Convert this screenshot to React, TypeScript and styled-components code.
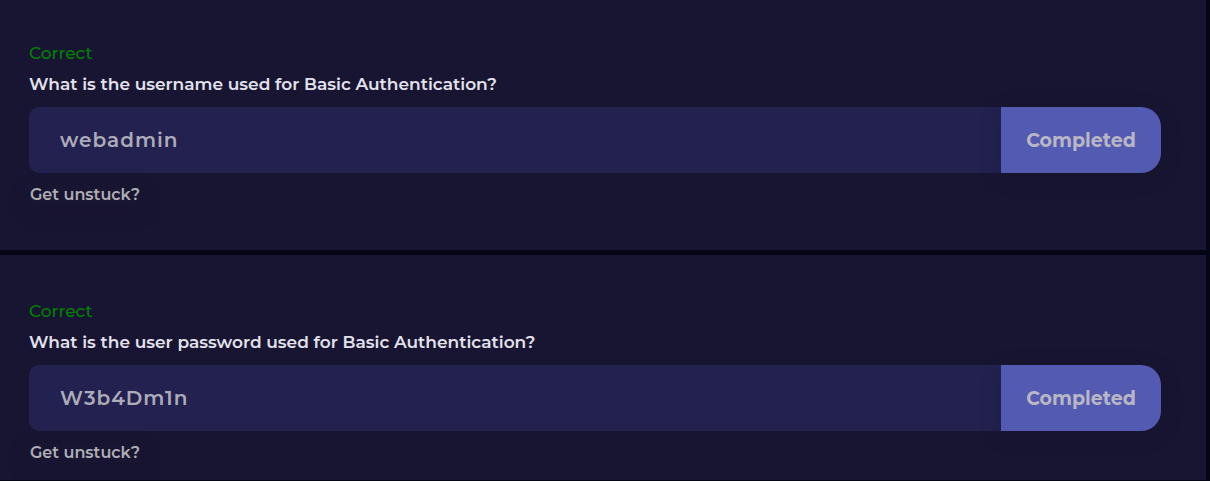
import React, { useId } from "react";
import styled, { createGlobalStyle } from "styled-components";

const GlobalStyle = createGlobalStyle`
  *, *::before, *::after {
    box-sizing: border-box;
  }
  body {
    margin: 0;
    background: #040615;
    color: #e3e2ec;
    font-family: Montserrat, Inter, "Open Sans", sans-serif;
    font-size: 17px;
  }
`;

const TaskList = styled.main`
  display: flex;
  flex-direction: column;
  gap: 5px;
  padding-right: 4px;
`;

const QuestionCard = styled.section`
  padding: 41px 45px 45px 29px;
  background: #181532;

  &:first-child {
    padding-top: 38px;
  }
  &:last-child {
    padding-bottom: 17px;
  }
`;

const Status = styled.p`
  margin: 0;
  color: #008000;
  font-weight: 500;
  line-height: 31px;
`;

const QuestionLabel = styled.label`
  display: block;
  margin-bottom: 7px;
  font-weight: 600;
  line-height: 31px;
`;

const AnswerRow = styled.div`
  display: flex;
  height: 66px;
`;

const AnswerInput = styled.input`
  flex: 1;
  min-width: 0;
  padding: 0 31px;
  border: 0;
  border-radius: 10px 0 0 10px;
  background: #23214f;
  color: #adacba;
  font: inherit;
  font-size: 20px;
  font-weight: 600;
  letter-spacing: 1px;
`;

const SubmitButton = styled.button`
  flex: 0 0 160px;
  padding: 0;
  border: 0;
  border-radius: 0 20px 20px 0;
  background: #535ab2;
  box-shadow: 0 4px 20px rgba(24, 18, 36, 0.25);
  color: #b9b7c4;
  font: inherit;
  font-size: 19px;
  font-weight: 700;
`;

const HintButton = styled.button`
  display: block;
  margin-top: 12px;
  padding: 0 1px;
  border: 0;
  background: transparent;
  box-shadow: 0 6px 20px rgba(20, 16, 44, 0.3);
  color: #b0afb3;
  font: inherit;
  font-size: 16px;
  font-weight: 600;
  line-height: 20px;
`;

interface QuestionProps {
  question: string;
  answer: string;
}

function Question({ question, answer }: QuestionProps) {
  const inputId = useId();
  return (
    <QuestionCard>
      <Status>Correct</Status>
      <QuestionLabel htmlFor={inputId}>{question}</QuestionLabel>
      <AnswerRow>
        <AnswerInput id={inputId} type="text" value={answer} readOnly />
        <SubmitButton type="button">Completed</SubmitButton>
      </AnswerRow>
      <HintButton type="button">Get unstuck?</HintButton>
    </QuestionCard>
  );
}

export default function App() {
  return (
    <>
      <GlobalStyle />
      <TaskList>
        <Question
          question="What is the username used for Basic Authentication?"
          answer="webadmin"
        />
        <Question
          question="What is the user password used for Basic Authentication?"
          answer="W3b4Dm1n"
        />
      </TaskList>
    </>
  );
}
